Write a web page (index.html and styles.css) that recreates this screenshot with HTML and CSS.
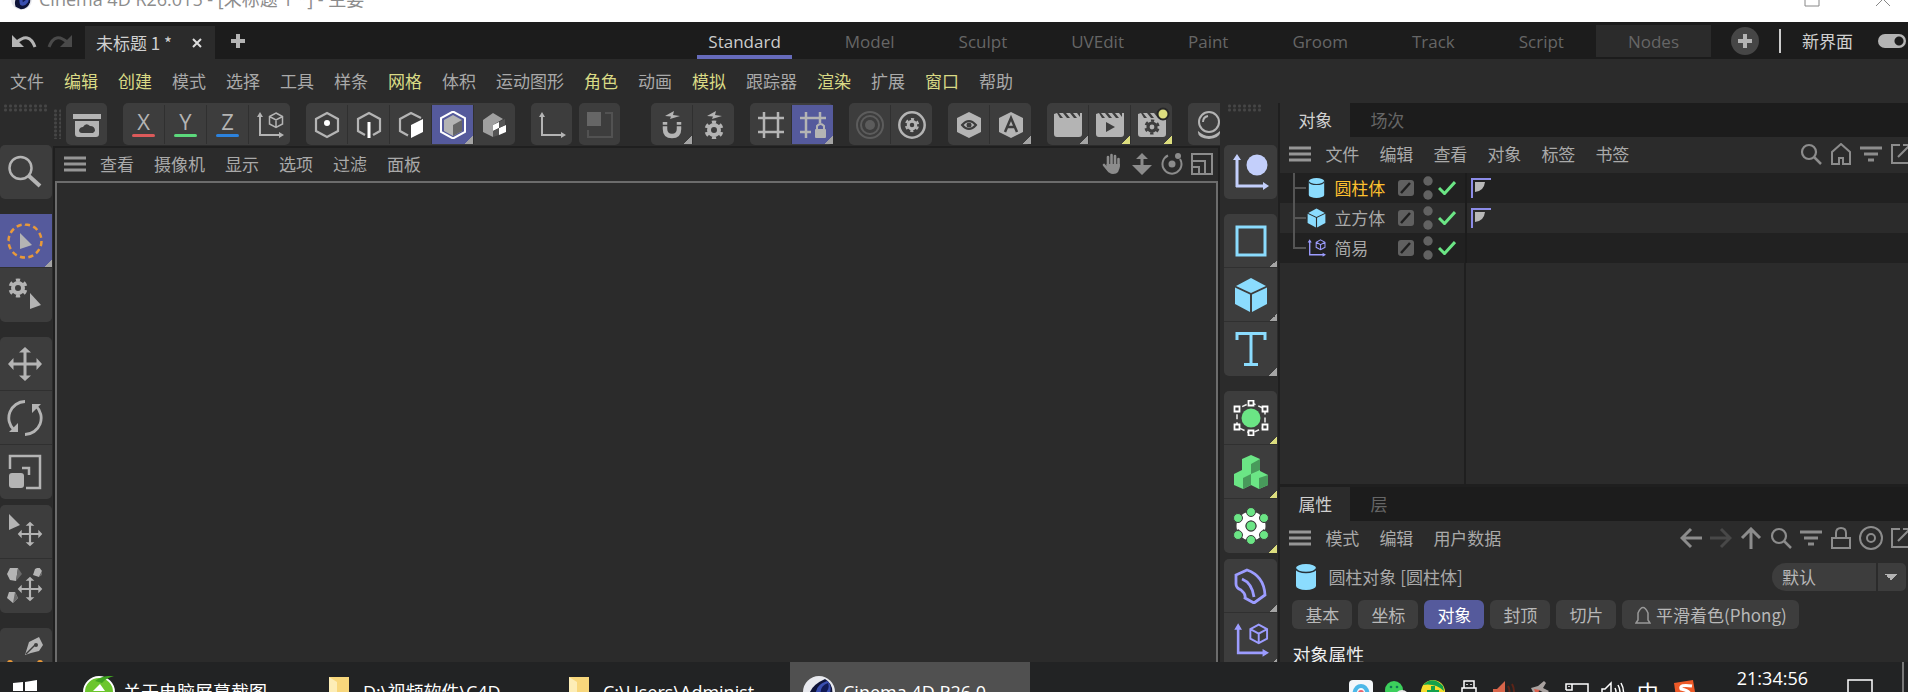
FILE: index.html
```html
<!DOCTYPE html>
<html lang="zh-CN">
<head>
    <meta charset="UTF-8">
    <title>Cinema 4D R26.015 - [未标题 1 *] - 主要</title>
    <meta name="viewport" content="width=device-width, initial-scale=1.0">
    <link rel="stylesheet" href="styles.css">
</head>
<body>

<!-- shared icons -->
<svg class="defs" aria-hidden="true">
    <symbol id="c4d" viewBox="0 0 32 32">
        <circle cx="16" cy="16" r="16" fill="#e8e9ee"/>
        <path d="M7 27Q2 12 22 3Q31 8 29 20Q26 30 15 31Z" fill="#0e1338"/>
        <path d="M14 24Q9 10 24 5Q30 9 26 20Q20 28 14 24Z" fill="#3a4fb0"/>
        <path d="M18 20Q16 10 25 7Q28 15 18 20Z" fill="#111a55"/>
    </symbol>
    <symbol id="burger" viewBox="0 0 22 16">
        <path d="M0 2H22M0 8H22M0 14H22" stroke="#969696" stroke-width="3"/>
    </symbol>
    <symbol id="gear" viewBox="0 0 20 20">
        <circle cx="10" cy="10" r="5" fill="none" stroke="currentColor" stroke-width="4"/>
        <circle cx="10" cy="10" r="8" fill="none" stroke="currentColor" stroke-width="3" pathLength="12" stroke-dasharray="1 1" stroke-dashoffset="1.500"/>
    </symbol>
    <symbol id="axis-cube" viewBox="0 0 28 28">
        <path d="M4 25V5M3 24H24" stroke="currentColor" stroke-width="2" fill="none"/>
        <path d="M1 6L4 1L7 6ZM23 21L28 24L23 27Z" fill="currentColor"/>
        <path d="M20 2L26.500 5.500V13L20 16.500L13.500 13V5.500ZM13.500 5.500L20 9L26.500 5.500M20 9V16" stroke="currentColor" stroke-width="1.500" fill="none"/>
    </symbol>
    <symbol id="hex" viewBox="0 0 28 28">
        <path d="M14 2L25 8V20L14 26L3 20V8Z" stroke="currentColor" stroke-width="2.200" fill="none"/>
    </symbol>
    <symbol id="search" viewBox="0 0 22 22">
        <circle cx="9" cy="9" r="7" stroke="currentColor" stroke-width="2.200" fill="none"/>
        <path d="M14 14L21 21" stroke="currentColor" stroke-width="2.500"/>
    </symbol>
    <symbol id="filter" viewBox="0 0 22 22">
        <path d="M0 5H22M4 11H18M8 17H14" stroke="currentColor" stroke-width="3"/>
    </symbol>
    <symbol id="external" viewBox="0 0 22 22">
        <path d="M10 2H2V20H20V13M13 2H20V9M20 2L8 14" stroke="currentColor" stroke-width="2" fill="none"/>
    </symbol>
    <symbol id="cylinder" viewBox="0 0 20 26">
        <path d="M0 4V22A10 4 0 0 0 20 22V4A10 4 0 0 0 0 4Z" fill="#8bdcfe"/>
        <path d="M0 4.500A10 4 0 0 0 20 4.500" stroke="#26323a" stroke-width="1.500" fill="none"/>
    </symbol>
    <symbol id="cube" viewBox="0 0 32 36">
        <path d="M16 1L31 9L16 16L1 9Z" fill="#8bdcfe"/>
        <path d="M0 10.500L15 17.500V35L0 27Z" fill="#8bdcfe"/>
        <path d="M32 10.500L17 17.500V35L32 27Z" fill="#8bdcfe"/>
    </symbol>
    <symbol id="move" viewBox="0 0 36 36">
        <path d="M18 5V31M5 18H31" stroke="currentColor" stroke-width="3"/>
        <path d="M12 6.500L18 1L24 6.500ZM12 29.500L18 35L24 29.500ZM6.500 12L1 18L6.500 24ZM29.500 12L35 18L29.500 24Z" fill="currentColor"/>
    </symbol>
    <symbol id="slash" viewBox="0 0 16 18">
        <rect y="1" width="16" height="16" rx="3" fill="#606060"/>
        <path d="M3 14L12 4" stroke="#1f1f1f" stroke-width="2.500"/>
    </symbol>
    <symbol id="dots" viewBox="0 0 10 24">
        <circle cx="5" cy="5" r="4.700" fill="#626262"/>
        <circle cx="5" cy="19" r="4.700" fill="#626262"/>
    </symbol>
    <symbol id="check" viewBox="0 0 18 14">
        <path d="M1 7L6.500 12.500L17 1" stroke="#6be585" stroke-width="3" fill="none"/>
    </symbol>
    <symbol id="tag" viewBox="0 0 20 20">
        <path d="M1 20V1H20" stroke="#8c8ce8" stroke-width="2" fill="none"/>
        <path d="M4 4H14Q13 13 4 14Z" fill="#b8b8b8"/>
    </symbol>
    <symbol id="folder" viewBox="0 0 20 32">
        <path d="M0 1H20V32H0Z" fill="#f8d77c"/>
        <path d="M0 1L8 6V32H0Z" fill="#fdedb6"/>
    </symbol>
    <symbol id="clap" viewBox="0 0 28 26">
        <path d="M0 2L3 1L6 6H9L5 1H9L13 6H16L12 1H16L20 6H23L19 1H23L26 5V1H28V22Q28 25 25 25H3Q0 25 0 22Z" fill="currentColor"/>
    </symbol>
</svg>

<header class="titlebar">
    <div class="titlebar-inner">
        <svg class="logo"><use href="#c4d"/></svg>
        <span>Cinema 4D R26.015 - [未标题 1 *] - 主要</span>
        <button class="win-btn" aria-label="最大化"><svg width="16" height="16"><path d="M1 1H15V15H1Z" stroke="#888" fill="none"/></svg></button>
        <button class="win-btn" aria-label="关闭"><svg width="16" height="16"><path d="M1 1L15 15M15 1L1 15" stroke="#888" fill="none"/></svg></button>
    </div>
</header>

<div class="tabbar">
    <button class="history" aria-label="撤销"><svg width="26" height="14"><path d="M1 1V13H13Z" fill="#b4b4b4"/><path d="M5 9Q18 -3 24 13" stroke="#b4b4b4" stroke-width="3" fill="none"/></svg></button>
    <button class="history" aria-label="重做"><svg width="26" height="14"><path d="M25 1V13H13Z" fill="#4a4a4a"/><path d="M21 9Q8 -3 2 13" stroke="#4a4a4a" stroke-width="3" fill="none"/></svg></button>
    <div class="doc-tab">
        <span>未标题 1 *</span>
        <button aria-label="关闭标签"><svg width="10" height="10"><path d="M1 1L9 9M9 1L1 9" stroke="#ddd" stroke-width="2"/></svg></button>
    </div>
    <button class="add-tab" aria-label="新建标签"><svg width="14" height="14"><path d="M7 0V14M0 7H14" stroke="#b4b4b4" stroke-width="4"/></svg></button>
    <nav class="layouts">
        <a href="#" class="active">Standard</a>
        <a href="#">Model</a>
        <a href="#">Sculpt</a>
        <a href="#">UVEdit</a>
        <a href="#">Paint</a>
        <a href="#">Groom</a>
        <a href="#">Track</a>
        <a href="#">Script</a>
        <a href="#" class="boxed">Nodes</a>
    </nav>
    <button class="add-layout" aria-label="添加布局"><svg width="14" height="14"><path d="M7 0V14M0 7H14" stroke="#b4b4b4" stroke-width="4"/></svg></button>
    <label class="new-ui">新界面 <input type="checkbox" checked></label>
</div>

<nav class="menubar">
    <a href="#">文件</a>
    <a href="#" class="hl">编辑</a>
    <a href="#" class="hl">创建</a>
    <a href="#">模式</a>
    <a href="#">选择</a>
    <a href="#">工具</a>
    <a href="#">样条</a>
    <a href="#" class="hl">网格</a>
    <a href="#">体积</a>
    <a href="#">运动图形</a>
    <a href="#" class="hl">角色</a>
    <a href="#">动画</a>
    <a href="#" class="hl">模拟</a>
    <a href="#">跟踪器</a>
    <a href="#" class="hl">渲染</a>
    <a href="#">扩展</a>
    <a href="#" class="hl">窗口</a>
    <a href="#">帮助</a>
</nav>

<main class="workspace">
    <aside class="palette left">
        <div class="grip"></div>
        <div class="group">
            <button aria-label="搜索"><svg viewBox="0 0 36 36"><circle cx="13.500" cy="14" r="11" stroke="currentColor" stroke-width="2.500" fill="none"/><path d="M22 22L33 32" stroke="currentColor" stroke-width="4"/></svg></button>
        </div>
        <div class="group">
            <button class="active more" aria-label="实时选择"><svg viewBox="0 0 36 36"><circle cx="18" cy="18" r="16.500" stroke="#e8993a" stroke-width="2.500" fill="none" pathLength="24" stroke-dasharray="1.200 0.800"/><path d="M13 10V26L25 22Z" fill="currentColor"/></svg></button>
            <button aria-label="选择设置"><svg viewBox="0 0 36 36"><use href="#gear" x="1" y="1" width="20" height="20"/><path d="M23 16V32L34 28Z" fill="currentColor"/></svg></button>
        </div>
        <div class="group">
            <button aria-label="移动"><svg><use href="#move"/></svg></button>
            <button aria-label="旋转"><svg viewBox="0 0 36 36"><path d="M18 1.500A16.500 16.500 0 0 0 7 30M18 34.500A16.500 16.500 0 0 0 29 6" stroke="currentColor" stroke-width="2.800" fill="none"/><path d="M2 32H11V23ZM34 4H25V13Z" fill="currentColor"/></svg></button>
            <button aria-label="缩放"><svg viewBox="0 0 36 36"><path d="M3 15V2H33V34H19M15 14H22V21" stroke="currentColor" stroke-width="2.500" fill="none"/><rect x="2" y="19" width="15" height="15" rx="3" fill="currentColor"/></svg></button>
        </div>
        <div class="group near">
            <button aria-label="放置"><svg viewBox="0 0 36 36"><path d="M2 0V16L13 11Z" fill="currentColor"/><use href="#move" x="10" y="7" width="26" height="26"/></svg></button>
            <button aria-label="散布"><svg viewBox="0 0 36 36"><path d="M3 0H11L9 13L3 12L0 6ZM28 1L32 -1L35 3L32 9L26 7ZM2 24H8L11 30L6 35L0 30Z" fill="currentColor"/><path d="M11 0L15 6L9 13ZM35 3V7L32 9ZM8 24L11 30L6 35Z" fill="#6a6a6a"/><use href="#move" x="10" y="8" width="26" height="26"/></svg></button>
        </div>
        <div class="group">
            <button aria-label="样条画笔"><svg viewBox="0 0 36 36"><path d="M18 18L22 5L32 0L36 8L32 14L24 16Z" fill="currentColor"/><path d="M19 17L28 8" stroke="#3d3d3d" stroke-width="1.500"/><circle cx="29" cy="8" r="2" fill="#3d3d3d"/><circle cx="3" cy="26" r="3" fill="#e8993a"/><circle cx="33" cy="26" r="3" fill="#e8993a"/></svg></button>
        </div>
    </aside>

    <section class="center">
        <div class="toolbar">
            <div class="grip vertical"></div>
            <div class="group">
                <button aria-label="资产浏览器"><svg viewBox="0 0 28 28"><path d="M0 3H28V8H0ZM2 10H26V23Q26 26 23 26H5Q2 26 2 23Z" fill="currentColor"/><path d="M9 22Q6 22 6 19Q7 16 10 16Q13 11 17 15Q22 15 22 20L20 22Z" fill="#3d3d3d"/></svg></button>
            </div>
            <div class="group">
                <button class="axis x">X</button>
                <button class="axis y">Y</button>
                <button class="axis z">Z</button>
                <button aria-label="坐标系统"><svg><use href="#axis-cube"/></svg></button>
            </div>
            <div class="group">
                <button aria-label="点"><svg viewBox="0 0 28 28"><use href="#hex" width="28" height="28"/><circle cx="14" cy="12" r="3" fill="#fff"/></svg></button>
                <button aria-label="边"><svg viewBox="0 0 28 28"><path d="M10 24L3 20V8L14 2L25 8V20L18 24" stroke="currentColor" stroke-width="2.200" fill="none"/><path d="M14 11V27" stroke="#fff" stroke-width="3"/></svg></button>
                <button aria-label="多边形"><svg viewBox="0 0 28 28"><path d="M11 24.500L3 20V8L14 2L24 7" stroke="currentColor" stroke-width="2.200" fill="none"/><path d="M14 14L26 8V21L14 27Z" fill="#fff"/></svg></button>
                <button class="active more" aria-label="模型"><svg viewBox="0 0 28 28"><path d="M14 4L23 9V20L14 25L5 20V9Z" fill="#b4b4b4"/><path d="M14 14L23 9V20L14 25Z" fill="#666"/><path d="M14 0.500L26 7V21L14 27.500L2 21V7Z" stroke="#fff" stroke-width="2" fill="none"/></svg></button>
                <button aria-label="纹理"><svg viewBox="0 0 28 28"><path d="M2 9L12 2L22 8L12 14V26L2 21Z" fill="#a0a0a0"/><path d="M12 14L18 11V17L12 20ZM18 17L25 14V21L18 24Z" fill="#fff"/><path d="M18 11L24 8V14L18 17ZM12 20L18 17V24L12 26Z" fill="#555"/></svg></button>
            </div>
            <div class="group">
                <button aria-label="启用轴心"><svg viewBox="0 0 28 28"><path d="M4 25V5M3 24H24" stroke="currentColor" stroke-width="2"/><path d="M1 6L4 1L7 6ZM23 21L28 24L23 27Z" fill="currentColor"/></svg></button>
            </div>
            <div class="group near">
                <button aria-label="视窗独显"><svg viewBox="0 0 28 28"><rect x="1" y="1" width="14" height="14" fill="#666"/><path d="M19 2H26V26H2V19" stroke="#525252" stroke-width="2" fill="none"/></svg></button>
            </div>
            <div class="group far">
                <button class="more" aria-label="捕捉"><svg viewBox="0 0 28 28"><path d="M7 11V18Q7 25 14 25Q21 25 21 18V11" stroke="currentColor" stroke-width="4.500" fill="none"/><path d="M4 14.500H10M18 14.500H24" stroke="#3d3d3d" stroke-width="1.500"/><path d="M7 5L16 0L15 4L22 5L12 8L13 5.500Z" fill="currentColor"/></svg></button>
                <button aria-label="捕捉设置"><svg viewBox="0 0 28 28"><use href="#gear" x="4" y="9" width="20" height="20"/><path d="M7 5L16 0L15 4L22 5L12 8L13 5.500Z" fill="currentColor"/></svg></button>
            </div>
            <div class="group">
                <button aria-label="工作平面"><svg viewBox="0 0 28 28"><path d="M7 1V27M21 1V27M1 7H27M1 21H27" stroke="currentColor" stroke-width="2.500"/></svg></button>
                <button class="active more" aria-label="锁定工作平面"><svg viewBox="0 0 28 28"><path d="M7 1V27M21 1V12M1 7H27M1 21H12" stroke="currentColor" stroke-width="2.500"/><rect x="16" y="18" width="11" height="9" rx="1" fill="currentColor"/><path d="M18 18V15Q21.500 11 25 15V18" stroke="currentColor" stroke-width="2" fill="none"/></svg></button>
            </div>
            <div class="group">
                <button aria-label="软选择"><svg viewBox="0 0 28 28"><g fill="none" stroke="#5c5c5c" stroke-width="2"><circle cx="14" cy="14" r="13"/><circle cx="14" cy="14" r="9"/></g><circle cx="14" cy="14" r="5" fill="#5c5c5c"/></svg></button>
                <button aria-label="软选择设置"><svg viewBox="0 0 28 28"><circle cx="14" cy="14" r="12.700" fill="none" stroke="currentColor" stroke-width="2.500"/><use href="#gear" x="6.500" y="6.500" width="15" height="15"/></svg></button>
            </div>
            <div class="group">
                <button aria-label="显示"><svg viewBox="0 0 28 28"><path d="M14 1L26 7V21L14 27L2 21V7Z" fill="currentColor"/><path d="M7 14Q14 6 21 14Q14 22 7 14Z" stroke="#3d3d3d" stroke-width="2" fill="none"/><circle cx="14" cy="14" r="2.500" fill="#3d3d3d"/></svg></button>
                <button class="more" aria-label="自动"><svg viewBox="0 0 28 28"><path d="M14 1L26 7V21L14 27L2 21V7Z" fill="currentColor"/><path d="M8 21L14 7L20 21M10 16H18" stroke="#3d3d3d" stroke-width="2.500" fill="none"/></svg></button>
            </div>
            <div class="group">
                <button class="more" aria-label="渲染活动视图"><svg><use href="#clap"/></svg></button>
                <button class="more gold" aria-label="渲染到图片查看器"><svg viewBox="0 0 28 28"><use href="#clap" y="1" width="28" height="26"/><path d="M10 11V21L19 16Z" fill="#3d3d3d"/></svg></button>
                <button class="more gold" aria-label="编辑渲染设置"><svg class="spill" viewBox="0 0 28 28"><use href="#clap" y="1" width="28" height="26"/><use href="#gear" x="6" y="8" width="16" height="16" color="#3d3d3d"/><circle cx="25" cy="3" r="5.500" fill="#dcdd7e" stroke="#262626" stroke-width="2"/></svg></button>
            </div>
            <div class="group">
                <button aria-label="材质管理器"><svg viewBox="0 0 28 28"><circle cx="14" cy="11" r="10" stroke="currentColor" stroke-width="2" fill="none"/><path d="M8 11Q8 6 13 5" stroke="currentColor" stroke-width="2" fill="none"/><path d="M3 20Q14 30 25 20Q26 27 14 28Q2 27 3 20Z" fill="currentColor"/></svg></button>
            </div>
        </div>

        <div class="view">
            <div class="view-menu">
                <svg class="burger"><use href="#burger"/></svg>
                <a href="#">查看</a>
                <a href="#">摄像机</a>
                <a href="#">显示</a>
                <a href="#">选项</a>
                <a href="#">过滤</a>
                <a href="#">面板</a>
                <div class="icons">
                    <button aria-label="平移"><svg viewBox="0 0 22 22"><path d="M7 13V4M10.500 11V2M14 11V3M17.500 13V6M3 12L8 18" stroke="currentColor" stroke-width="2.600" stroke-linecap="round"/><path d="M5.500 11H19Q19 21 12 21Q8 21 5.500 16Z" fill="currentColor"/></svg></button>
                    <button aria-label="推拉"><svg viewBox="0 0 22 22"><path d="M11 4V14" stroke="currentColor" stroke-width="3"/><path d="M5 6L11 0L17 6ZM1 12H21L11 22Z" fill="currentColor"/></svg></button>
                    <button aria-label="旋转视图"><svg viewBox="0 0 22 22"><path d="M7 2.500A9.500 9.500 0 1 0 19 6" stroke="currentColor" stroke-width="2" fill="none"/><circle cx="11" cy="11" r="3.500" fill="currentColor"/><circle cx="17" cy="3" r="3" fill="currentColor"/></svg></button>
                    <button aria-label="切换视图"><svg viewBox="0 0 22 22"><path d="M1 1H21V21H1ZM1 8H14V21M1 14H8V21" stroke="currentColor" stroke-width="2" fill="none"/></svg></button>
                </div>
            </div>
            <div class="viewport"></div>
        </div>
    </section>

    <aside class="palette right">
        <div class="grip"></div>
        <div class="group">
            <button aria-label="空白"><svg viewBox="0 0 36 36" color="#c3cffb"><path d="M4 33V5M3 32H31" stroke="currentColor" stroke-width="3"/><path d="M0 6L4 0L8 6ZM30 28L36 32L30 36Z" fill="currentColor"/><circle cx="24" cy="11" r="10.500" fill="currentColor"/></svg></button>
        </div>
        <div class="group">
            <button class="more" aria-label="矩形"><svg viewBox="0 0 36 36"><rect x="4" y="4" width="28" height="28" stroke="#8bdcfe" stroke-width="3" fill="none"/></svg></button>
            <button class="more" aria-label="立方体"><svg><use href="#cube"/></svg></button>
            <button class="more" aria-label="文本"><svg viewBox="0 0 36 36"><path d="M4 9V2.500H32V9M18 2V33M11 33.500H25" stroke="#8bdcfe" stroke-width="3" fill="none"/></svg></button>
        </div>
        <div class="group">
            <button class="more gold" aria-label="细分曲面"><svg viewBox="0 0 36 36"><circle cx="18" cy="18" r="9.500" fill="#6be585"/><path d="M18 2.500L32 9V27L18 33.500L4 27V9Z" stroke="#eee" stroke-width="1.500" fill="none" stroke-dasharray="5 3"/><path d="M15.500 0.500H20.500V5.500H15.500ZM15.500 30.500H20.500V35.500H15.500ZM1.500 6.500H6.500V11.500H1.500ZM29.500 6.500H34.500V11.500H29.500ZM1.500 24.500H6.500V29.500H1.500ZM29.500 24.500H34.500V29.500H29.500Z" fill="#3d3d3d" stroke="#fff" stroke-width="1.800"/></svg></button>
            <button class="more gold" aria-label="克隆"><svg viewBox="0 0 36 36"><path d="M18 1L27 5V17L35 21V31L26 35L18 31L10 35L1 31V20L9 16V5Z" fill="#6be585"/><path d="M18 10L27 5V16L18 20ZM10 24L18 20V31L10 35ZM26 24L35 21V31L26 35Z" fill="#489a5b"/></svg></button>
            <button class="more gold" aria-label="运动场"><svg viewBox="0 0 36 36"><circle cx="18" cy="18" r="9" fill="none" stroke="#fff" stroke-width="7"/><circle cx="18" cy="18" r="12.500" fill="none" stroke="#fff" stroke-width="4" pathLength="12" stroke-dasharray="1 1" stroke-dashoffset="0.500"/><g fill="#6be585" stroke="#3d3d3d" stroke-width="1"><circle cx="18" cy="18" r="5"/><circle cx="18" cy="4" r="4.500"/><circle cx="18" cy="32" r="4.500"/><circle cx="5" cy="10" r="4.500"/><circle cx="31" cy="10" r="4.500"/><circle cx="5" cy="27" r="4.500"/><circle cx="31" cy="27" r="4.500"/></g></svg></button>
        </div>
        <div class="group near">
            <button class="more" aria-label="弯曲"><svg viewBox="0 0 36 36"><path d="M3 7L14 2Q31 8 32 27L21 35L12 30Q13 26 8 22Q3 20 3 16ZM9 11Q19 15 21 29" stroke="#9c9cff" stroke-width="2.800" fill="none"/></svg></button>
            <button class="more" aria-label="简易"><svg color="#9c9cff"><use href="#axis-cube"/></svg></button>
        </div>
    </aside>

    <aside class="managers">
        <section class="objects">
            <div class="tabs">
                <button class="active">对象</button>
                <button>场次</button>
            </div>
            <div class="panel-menu">
                <svg class="burger"><use href="#burger"/></svg>
                <a href="#">文件</a>
                <a href="#">编辑</a>
                <a href="#">查看</a>
                <a href="#">对象</a>
                <a href="#">标签</a>
                <a href="#">书签</a>
                <div class="icons">
                    <button aria-label="搜索"><svg><use href="#search"/></svg></button>
                    <button aria-label="主页"><svg viewBox="0 0 22 22"><path d="M2 21V9L11 1L20 9V21H13V15H9V21Z" stroke="currentColor" stroke-width="2" fill="none"/></svg></button>
                    <button aria-label="过滤"><svg><use href="#filter"/></svg></button>
                    <button aria-label="新窗口"><svg><use href="#external"/></svg></button>
                </div>
            </div>
            <table class="tree">
                <tr class="selected">
                    <td class="name"><div><i></i><svg class="type"><use href="#cylinder"/></svg>圆柱体</div></td>
                    <td class="flags"><div><svg class="slash"><use href="#slash"/></svg><svg class="dots"><use href="#dots"/></svg><svg class="check"><use href="#check"/></svg></div></td>
                    <td class="tags"><svg><use href="#tag"/></svg></td>
                </tr>
                <tr>
                    <td class="name"><div><i></i><svg class="type"><use href="#cube"/></svg>立方体</div></td>
                    <td class="flags"><div><svg class="slash"><use href="#slash"/></svg><svg class="dots"><use href="#dots"/></svg><svg class="check"><use href="#check"/></svg></div></td>
                    <td class="tags"><svg><use href="#tag"/></svg></td>
                </tr>
                <tr>
                    <td class="name"><div><i class="last"></i><svg class="type" color="#9c9cff"><use href="#axis-cube"/></svg>简易</div></td>
                    <td class="flags"><div><svg class="slash"><use href="#slash"/></svg><svg class="dots"><use href="#dots"/></svg><svg class="check"><use href="#check"/></svg></div></td>
                    <td class="tags"></td>
                </tr>
            </table>
            <div class="tree-space"></div>
        </section>

        <section class="attributes">
            <div class="tabs">
                <button class="active">属性</button>
                <button>层</button>
            </div>
            <div class="panel-menu">
                <svg class="burger"><use href="#burger"/></svg>
                <a href="#">模式</a>
                <a href="#">编辑</a>
                <a href="#">用户数据</a>
                <div class="icons">
                    <button aria-label="后退"><svg viewBox="0 0 22 22"><path d="M22 11H2M11 2L2 11L11 20" stroke="currentColor" stroke-width="3" fill="none"/></svg></button>
                    <button aria-label="前进" disabled><svg viewBox="0 0 22 22"><path d="M0 11H20M11 2L20 11L11 20" stroke="currentColor" stroke-width="3" fill="none"/></svg></button>
                    <button aria-label="上一级"><svg viewBox="0 0 22 22"><path d="M11 22V2M2 11L11 2L20 11" stroke="currentColor" stroke-width="3" fill="none"/></svg></button>
                    <button aria-label="搜索"><svg><use href="#search"/></svg></button>
                    <button aria-label="过滤"><svg><use href="#filter"/></svg></button>
                    <button aria-label="锁定"><svg viewBox="0 0 22 22"><path d="M2 11H20V21H2ZM6 11V6Q6 1 11 1Q16 1 16 6V11" stroke="currentColor" stroke-width="2" fill="none"/></svg></button>
                    <button aria-label="目标"><svg class="spill" viewBox="0 0 22 22"><g fill="none" stroke="currentColor" stroke-width="2"><circle cx="11" cy="11" r="11"/><circle cx="11" cy="11" r="4"/></g></svg></button>
                    <button aria-label="新窗口"><svg><use href="#external"/></svg></button>
                </div>
            </div>
            <div class="object-title">
                <svg><use href="#cylinder"/></svg>
                <span>圆柱对象 [圆柱体]</span>
                <select aria-label="预设"><option>默认</option></select>
            </div>
            <div class="pages">
                <button>基本</button>
                <button>坐标</button>
                <button class="active">对象</button>
                <button>封顶</button>
                <button>切片</button>
                <button class="phong"><svg width="16" height="18"><path d="M1 17L3 14V7Q8 -4 13 7V14L15 17Z" stroke="#999" stroke-width="1.500" fill="none"/></svg>平滑着色(Phong)</button>
            </div>
            <h2>对象属性</h2>
        </section>
    </aside>
</main>

<footer class="taskbar">
    <div class="taskbar-inner">
        <button class="start" aria-label="开始"><svg width="24" height="24"><path d="M0 3L10 2V11H0ZM12 2L24 0V11H12ZM0 13H10V22L0 21ZM12 13H24V24L12 22Z" fill="#fff"/></svg></button>
        <button class="task"><svg viewBox="0 0 32 32"><circle cx="16" cy="16" r="15" fill="#6cc62d" stroke="#fff" stroke-width="2"/><path d="M12 5Q20 -1 31 0Q23 2 19 7Z" fill="#3fa320"/><path d="M10 15L17 8L22 15Z" fill="#fff"/></svg><span>关于电脑屏幕截图</span></button>
        <button class="task"><svg><use href="#folder"/></svg><span>D:\视频软件\C4D</span></button>
        <button class="task"><svg><use href="#folder"/></svg><span>C:\Users\Administ</span></button>
        <button class="task active"><svg><use href="#c4d"/></svg><span>Cinema 4D R26.0</span></button>
        <div class="tray">
            <svg viewBox="0 0 24 24"><rect width="24" height="24" rx="4" fill="#f4f7fa"/><path d="M5 16Q6 6 12 6Q18 6 19 16" stroke="#4cb8e8" stroke-width="4" fill="none"/><circle cx="12" cy="13" r="3" fill="#e8606a"/></svg>
            <svg viewBox="0 0 24 24"><circle cx="9" cy="10" r="9" fill="#3ccf5c"/><circle cx="17" cy="17" r="7" fill="#e8e8e8"/><circle cx="6" cy="7" r="1.300" fill="#175"/><circle cx="12" cy="7" r="1.300" fill="#175"/></svg>
            <svg viewBox="0 0 24 24"><circle cx="12" cy="12" r="12" fill="#f7dd2c"/><path d="M2 5Q12 -5 22 6L23 11Q14 3 2 5Z" fill="#12a14b"/><path d="M12 6V18M6 12H18" stroke="#12a14b" stroke-width="4"/></svg>
            <svg viewBox="0 0 24 24"><path d="M7 1H17V8H7ZM5 8H19V24H5ZM10 4V5M14 4V5" stroke="#fff" stroke-width="1.500" fill="none"/></svg>
            <svg viewBox="0 0 24 24"><path d="M0 9H4L12 1V22L4 16H0Z" fill="#d8654a"/><path d="M15 6Q18 11 15 16M19 4Q23 11 19 19" stroke="#5c2418" stroke-width="2" fill="none"/></svg>
            <svg viewBox="0 0 24 24"><path d="M2 8L9 6L15 1L17 3L14 8L20 11L17 14L10 10L5 14Z" fill="#a9a2a0"/><path d="M5 9L11 10L7 15Z" fill="#d9604c"/></svg>
            <svg viewBox="0 0 24 24"><path d="M1 10V4H23V18H8M1 4H7V10H1M4 6V7" stroke="#fff" stroke-width="1.500" fill="none"/></svg>
            <svg viewBox="0 0 24 24"><path d="M1 9H4L10 3V20L4 15H1ZM14 8Q16 12 14 15M17 5Q21 12 17 18M20 3Q25 12 20 20" stroke="#fff" stroke-width="1.500" fill="none"/></svg>
            <span class="ime">中</span>
            <svg viewBox="0 0 24 24"><path d="M1 3L20 0L24 24H4Z" fill="#ee5a28"/><path d="M19 6Q6 4 8 9Q18 11 17 16Q14 20 6 18" stroke="#fff" stroke-width="3" fill="none"/></svg>
        </div>
        <time>21:34:56</time>
        <svg class="notice" viewBox="0 0 26 26"><path d="M1 1H25V20H14L9 25V20H1Z" stroke="#fff" stroke-width="1.500" fill="none"/></svg>
        <div class="desktop-edge"></div>
    </div>
</footer>

</body>
</html>
```

FILE: styles.css
```css
* {
    box-sizing: border-box;
}

body {
    margin: 0;
    height: 100vh;
    display: flex;
    flex-direction: column;
    overflow: hidden;
    background: #2b2b2b;
    color: #a9a9a9;
    font-family: "Noto Sans CJK SC", "Noto Sans", sans-serif;
    font-size: 17px;
    line-height: 24px;
}

a {
    color: inherit;
    text-decoration: none;
}

button {
    padding: 0;
    border: none;
    background: none;
    color: inherit;
    font: inherit;
    white-space: nowrap;
}

svg {
    display: block;
    flex: none;
}

.defs {
    display: none;
}

.spill {
    overflow: visible;
}

/* window title */
.titlebar {
    flex: none;
    height: 22px;
    overflow: hidden;
    background: #fff;
    color: #8c8c8c;
}

.titlebar-inner {
    display: flex;
    align-items: center;
    height: 44px;
    margin-top: -23px;
    padding: 0 17px 0 11px;
    font-family: "Open Sans", "Noto Sans CJK SC", sans-serif;
    font-size: 18px;
}

.logo {
    width: 21px;
    height: 21px;
    margin-right: 7px;
}

.win-btn {
    margin-left: 55px;
}

.titlebar-inner span + .win-btn {
    margin-left: auto;
}

/* document and layout tabs */
.tabbar {
    flex: none;
    display: flex;
    align-items: center;
    height: 37px;
    padding-left: 11px;
    background: #1c1c1c;
    overflow: hidden;
}

.history {
    margin-right: 10px;
}

.doc-tab {
    display: flex;
    align-items: center;
    align-self: flex-end;
    justify-content: space-between;
    width: 130px;
    height: 33px;
    margin-left: 2px;
    padding: 0 13px 0 11px;
    background: #2b2b2b;
    color: #d0d0d0;
}

.add-tab {
    margin-left: 16px;
}

.layouts {
    display: flex;
    align-self: stretch;
    align-items: flex-start;
    margin-left: auto;
    padding-top: 3px;
    font-family: "Open Sans", sans-serif;
    color: #666;
}

.layouts a {
    height: 32px;
    padding: 0 32px;
    line-height: 33px;
}

.layouts .active {
    color: #ccc;
    position: relative;
}

.layouts .active::after {
    content: "";
    position: absolute;
    left: 21px;
    right: 21px;
    bottom: -2px;
    height: 4px;
    background: #666bbb;
}

.layouts .boxed {
    background: #2b2b2b;
}

.add-layout {
    display: grid;
    place-items: center;
    width: 28px;
    height: 28px;
    margin: 0 20px;
    border-radius: 50%;
    background: #464646;
}

.new-ui {
    display: flex;
    align-items: center;
    gap: 25px;
    padding: 0 2px 0 21px;
    border-left: 2px solid #ccc;
    color: #d0d0d0;
}

.new-ui input {
    appearance: none;
    width: 28px;
    height: 14px;
    margin: 0;
    border-radius: 7px;
    background: radial-gradient(circle at 21px 7px, #1c1c1c 4px, #b4b4b4 5px);
}

.menubar {
    flex: none;
    display: flex;
    gap: 20px;
    padding: 10px;
    white-space: nowrap;
}

.hl {
    color: #d9da85;
}

/* three columns of tools plus managers */
.workspace {
    flex: 1;
    min-height: 0;
    display: grid;
    grid-template-columns: 53px minmax(0, 1fr) 58px 33%;
    grid-template-rows: minmax(0, 1fr);
    overflow: hidden;
}

.group {
    display: flex;
    flex: none;
    gap: 1px;
    background: #3d3d3d;
    border-radius: 5px;
    color: #b4b4b4;
}

.group button {
    position: relative;
    display: grid;
    place-items: center;
}

.group button + button {
    box-shadow: -1px 0 #303030;
}

.group .active {
    background: #555a9c;
}

.group .more::after {
    content: "";
    position: absolute;
    right: 0;
    bottom: 0;
    width: 8px;
    height: 8px;
    background: linear-gradient(135deg, transparent 50%, #a4a4a4 50%);
}

.group .gold::after {
    background: linear-gradient(135deg, transparent 50%, #dcdd7e 50%);
}

.grip {
    flex: none;
    width: 44px;
    height: 8px;
    background: radial-gradient(circle, #464646 1px, transparent 2px) 0 0 / 5px 4px;
}

.grip.vertical {
    width: 8px;
    height: 30px;
    margin-top: 6px;
}

.palette {
    display: flex;
    flex-direction: column;
    gap: 15px;
    padding-top: 1px;
    overflow: hidden;
}

.palette .grip {
    margin: 0 0 18px 3px;
}

.palette .group {
    flex-direction: column;
    gap: 0;
}

.palette .near {
    margin-top: -9px;
}

.palette .group button + button {
    box-shadow: 0 -1px #303030;
}

.palette button {
    height: 54px;
}

.palette svg {
    width: 36px;
    height: 36px;
}

.left .group {
    width: 52px;
}

.left .group button {
    padding-right: 2px;
}

.right {
    padding-left: 4px;
}

.right .grip {
    width: 36px;
}

.right .group {
    width: 53px;
}

.center {
    display: flex;
    flex-direction: column;
    min-width: 0;
}

.toolbar {
    flex: none;
    display: flex;
    gap: 16px;
    height: 42px;
    overflow: hidden;
}

.toolbar .group {
    padding: 2px 0 1px;
}

.toolbar .grip + .group {
    margin-left: -11px;
}

.toolbar .near {
    margin-left: -9px;
}

.toolbar .far {
    margin-left: 15px;
}

.toolbar button {
    width: 41px;
}

.toolbar svg {
    width: 28px;
    height: 28px;
}

.toolbar .axis {
    font-family: "Open Sans", sans-serif;
    font-size: 22px;
    line-height: 26px;
    place-items: start center;
    padding-top: 3px;
}

.axis::before {
    content: "";
    position: absolute;
    left: 9px;
    right: 9px;
    bottom: 7px;
    height: 3px;
    border-radius: 2px;
}

.x::before {
    background: #dc5a5a;
}

.y::before {
    background: #5cd97c;
}

.z::before {
    background: #2c82dd;
}

.view {
    flex: 1;
    display: flex;
    flex-direction: column;
    margin-top: 1px;
    border: 2px solid #1f1f1f;
    border-bottom: none;
}

.view-menu,
.panel-menu {
    display: flex;
    align-items: center;
    gap: 20px;
    white-space: nowrap;
}

.view-menu {
    height: 33px;
    padding: 0 5px 2px 9px;
}

.burger {
    width: 22px;
    height: 16px;
    margin-right: -6px;
}

.icons {
    display: flex;
    gap: 8px;
    margin-left: auto;
    color: #8c8c8c;
}

.icons svg {
    width: 22px;
    height: 22px;
}

.icons button:disabled {
    color: #484848;
}

.viewport {
    flex: 1;
    border: 2px solid #6c6c6c;
    border-bottom: none;
}

/* object and attribute managers */
.managers {
    display: flex;
    flex-direction: column;
    min-width: 0;
    overflow: hidden;
    border-left: 2px solid #1f1f1f;
}

.objects {
    flex: 1 0 381px;
    display: flex;
    flex-direction: column;
}

.attributes {
    flex: none;
    height: 178px;
    border-top: 3px solid #1f1f1f;
}

.tabs {
    display: flex;
    height: 34px;
    background: #1c1c1c;
    color: #666;
}

.tabs button {
    padding: 0 18px;
}

.tabs .active {
    background: #2b2b2b;
    color: #d0d0d0;
}

.tabs .active + button {
    margin-left: 2px;
}

.panel-menu {
    height: 36px;
    padding-left: 9px;
    padding-bottom: 3px;
}

.panel-menu .icons {
    margin-right: -4px;
}

.tree {
    width: 100%;
    border-collapse: collapse;
    table-layout: fixed;
}

.tree tr {
    height: 30px;
    background: #212121;
}

.tree tr:nth-child(even) {
    background: #2b2b2b;
}

.tree td {
    padding: 0;
}

.tree .selected .name {
    color: #fdc02f;
}

.name {
    width: 118px;
}

.name div,
.flags div {
    display: flex;
    align-items: center;
    height: 30px;
}

.name i {
    align-self: stretch;
    width: 13px;
    margin: 0 1px 0 13px;
    border-left: 2px solid #555;
    background: linear-gradient(#555, #555) 0 50% / 13px 2px no-repeat;
}

.name .last {
    height: 16px;
    background-position: 0 100%;
}

.type {
    width: 19px;
    height: 20px;
    margin-right: 8px;
}

.flags {
    width: 68px;
    border-right: 2px solid #1c1c1c;
}

.slash {
    width: 16px;
    height: 18px;
    margin-right: 9px;
}

.dots {
    width: 10px;
    height: 24px;
    margin-right: 5px;
}

.check {
    width: 18px;
    height: 14px;
}

.tags svg {
    width: 20px;
    height: 20px;
    margin-left: 4px;
}

.tree-space {
    flex: 1;
    width: 186px;
    border-right: 2px solid #1f1f1f;
}

.object-title {
    display: flex;
    align-items: center;
    height: 40px;
    padding: 0 2px 0 15px;
}

.object-title svg {
    width: 22px;
    height: 26px;
    margin-right: 11px;
}

.object-title select {
    appearance: none;
    width: 134px;
    height: 28px;
    margin-left: auto;
    padding: 0 10px;
    border: none;
    border-radius: 14px 5px 5px 14px;
    background: linear-gradient(#2b2b2b, #2b2b2b) 104px 0 / 2px 28px no-repeat,
        linear-gradient(45deg, transparent 50%, #b4b4b4 50%) 113px 11px / 6px 6px no-repeat,
        linear-gradient(-45deg, transparent 50%, #b4b4b4 50%) 119px 11px / 6px 6px no-repeat,
        #3d3d3d;
    color: #b8b8b8;
    font: inherit;
}

.pages {
    display: flex;
    gap: 6px;
    padding: 3px 0 0 12px;
}

.pages button {
    width: 60px;
    height: 29px;
    border-radius: 6px;
    background: #3d3d3d;
    color: #b8b8b8;
}

.pages .active {
    background: #555a9c;
    color: #fff;
}

.pages .phong {
    display: flex;
    align-items: center;
    justify-content: center;
    gap: 5px;
    width: 177px;
}

h2 {
    margin: 13px 0 0 12px;
    color: #eee;
    font-size: 18px;
    font-weight: 400;
}

/* system taskbar */
.taskbar {
    flex: none;
    height: 30px;
    overflow: hidden;
    background: #222324;
    color: #fff;
}

.taskbar-inner {
    display: flex;
    align-items: center;
    height: 60px;
    font-family: "Open Sans", "Noto Sans CJK SC", sans-serif;
    font-size: 18px;
}

.start {
    width: 70px;
    padding-left: 13px;
}

.task {
    display: flex;
    align-items: center;
    gap: 8px;
    width: 240px;
    height: 60px;
    padding-left: 13px;
}

.task svg {
    width: 32px;
    height: 32px;
}

.task.active {
    background: #505050;
}

.tray {
    display: flex;
    align-items: center;
    gap: 12px;
    margin-left: auto;
}

.tray svg {
    width: 24px;
    height: 24px;
}

.ime {
    width: 24px;
    font-size: 22px;
}

time {
    align-self: flex-start;
    margin-left: 40px;
    padding-top: 4px;
}

.notice {
    width: 26px;
    height: 26px;
    margin: 0 29px 0 39px;
}

.desktop-edge {
    align-self: stretch;
    width: 6px;
    border-left: 2px solid #777;
}
```
